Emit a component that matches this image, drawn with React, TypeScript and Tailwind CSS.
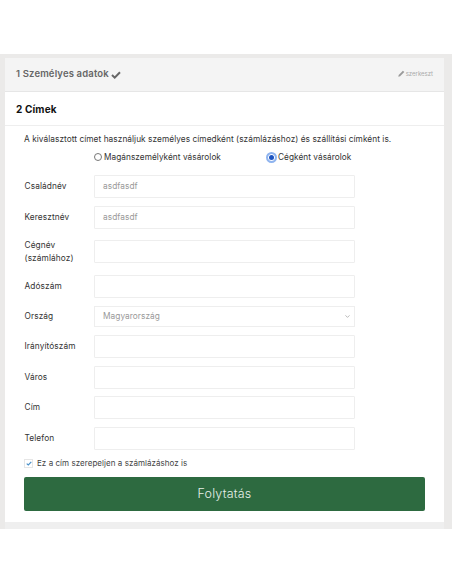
import React from "react";
import { ChevronDown } from "lucide-react";

const inputCls = "w-[261px] bg-white border border-[#eeeeee] rounded-[1px] h-[23px] px-2 text-[8.3px] tracking-[0.05px] text-[#999999] flex items-center";

function Row({ label, value, mt, two }: { label: string; value?: string; mt: string; two?: boolean }) {
  return (
    <div className={`flex items-center ${mt}`}>
      <div className={`w-[70px] pl-[0.5px] text-[8.3px] text-[#333333] tracking-[0.1px] ${two ? "leading-[12.5px] -my-[2px]" : ""}`}>
        {two ? <>Cégnév<br />(számlához)</> : label}
      </div>
      <div className={inputCls}>{value}</div>
    </div>
  );
}

export default function App() {
  return (
    <div className="bg-white w-[452px] h-[584px] pt-[54px] overflow-hidden [font-family:Inter,'Open_Sans',sans-serif]">
      <div className="bg-[#ebeae9] h-[475px] pl-[5px] pr-[8px] pt-[4px]">
        <div className="bg-[#f4f4f4] h-[34px] flex items-center justify-between px-[11px] border-b border-[#e6e6e6]">
          <div className="flex items-center gap-[2px] text-[9.5px] font-semibold text-[#666666] tracking-[0.15px]">
            1 Személyes adatok
            <svg width="10" height="8" viewBox="0 0 10 8" aria-hidden="true">
              <path d="M1 4 L3.7 6.6 L9 1.2" fill="none" stroke="#666666" strokeWidth="2" />
            </svg>
          </div>
          <div className="flex items-center gap-[1px] text-[6px] text-[#aaaaaa] -mt-[2px]">
            <svg width="7" height="7" viewBox="0 0 10 10" aria-hidden="true">
              <path d="M0.5 9.5 L1 7 L7 1 L9 3 L3 9 Z" fill="#999999" />
            </svg>
            szerkeszt
          </div>
        </div>
        <div className="bg-white h-[430px] flex flex-col">
          <div className="h-[34px] flex items-center pl-[11px] pt-[1px] border-b border-[#eeeeee] text-[10px] font-bold text-[#111111] tracking-[0.15px]">
            2 Címek
          </div>
          <div className="px-[19px]">
            <div className="text-[8.3px] text-[#333333] mt-[7px] leading-[12px] whitespace-nowrap tracking-[0.05px]">
              A kiválasztott címet használjuk személyes címedként (számlázáshoz) és szállítási címként is.
            </div>
            <div className="flex items-center h-[12px] mt-[6px] ml-[70px] text-[8.25px] text-[#333333] tracking-[0.05px]">
              <span className="w-[8px] h-[8px] rounded-full border border-[#777777] bg-white mr-[2px]" />
              <span className="w-[162px]">Magánszemélyként vásárolok</span>
              <span className="w-[11px] h-[11px] rounded-full bg-[#3b78e0] border-[2px] border-[#8fb4ef] flex items-center justify-center">
                <span className="w-[5px] h-[5px] rounded-full bg-[#1d54c0] ring-1 ring-white" />
              </span>
              <span className="ml-[1px]">Cégként vásárolok</span>
            </div>
            <Row label="Családnév" value="asdfasdf" mt="mt-[12px]" />
            <Row label="Keresztnév" value="asdfasdf" mt="mt-[7.5px]" />
            <Row label="" two mt="mt-[11.5px]" />
            <Row label="Adószám" mt="mt-[12px]" />
            <div className="flex items-center mt-[8px]">
              <div className="w-[70px] pl-[0.5px] text-[8.3px] text-[#333333] tracking-[0.1px]">Ország</div>
              <div className="w-[261px] h-[21px] border border-[#eeeeee] bg-white flex items-center justify-between pl-2 pr-[3px] text-[8.3px] tracking-[0.05px] text-[#999999]">
                Magyarország
                <ChevronDown size={7} className="text-[#888888]" />
              </div>
            </div>
            <Row label="Irányítószám" mt="mt-[8px]" />
            <Row label="Város" mt="mt-[8px]" />
            <Row label="Cím" mt="mt-[7px]" />
            <Row label="Telefon" mt="mt-[8px]" />
            <div className="flex items-center mt-[7px] h-[12px] text-[8px] text-[#444444] tracking-[0.05px]">
              <span className="w-[9px] h-[9px] border border-[#e6e6e6] bg-white flex items-center justify-center mr-[4px]">
                <svg width="6" height="5" viewBox="0 0 6 5" aria-hidden="true">
                  <path d="M0.7 2.6 L2.3 4 L5.3 0.9" fill="none" stroke="#4a90c8" strokeWidth="1.2" />
                </svg>
              </span>
              Ez a cím szerepeljen a számlázáshoz is
            </div>
            <div className="mt-[8px] h-[34px] w-[401px] bg-[#2d6a40] rounded-[2px] flex items-center justify-center text-[12.5px] font-light text-[#e6efe8] tracking-[0.2px]">
              Folytatás
            </div>
          </div>
        </div>
        <div className="bg-[#efefef] h-[7px]" />
      </div>
    </div>
  );
}
